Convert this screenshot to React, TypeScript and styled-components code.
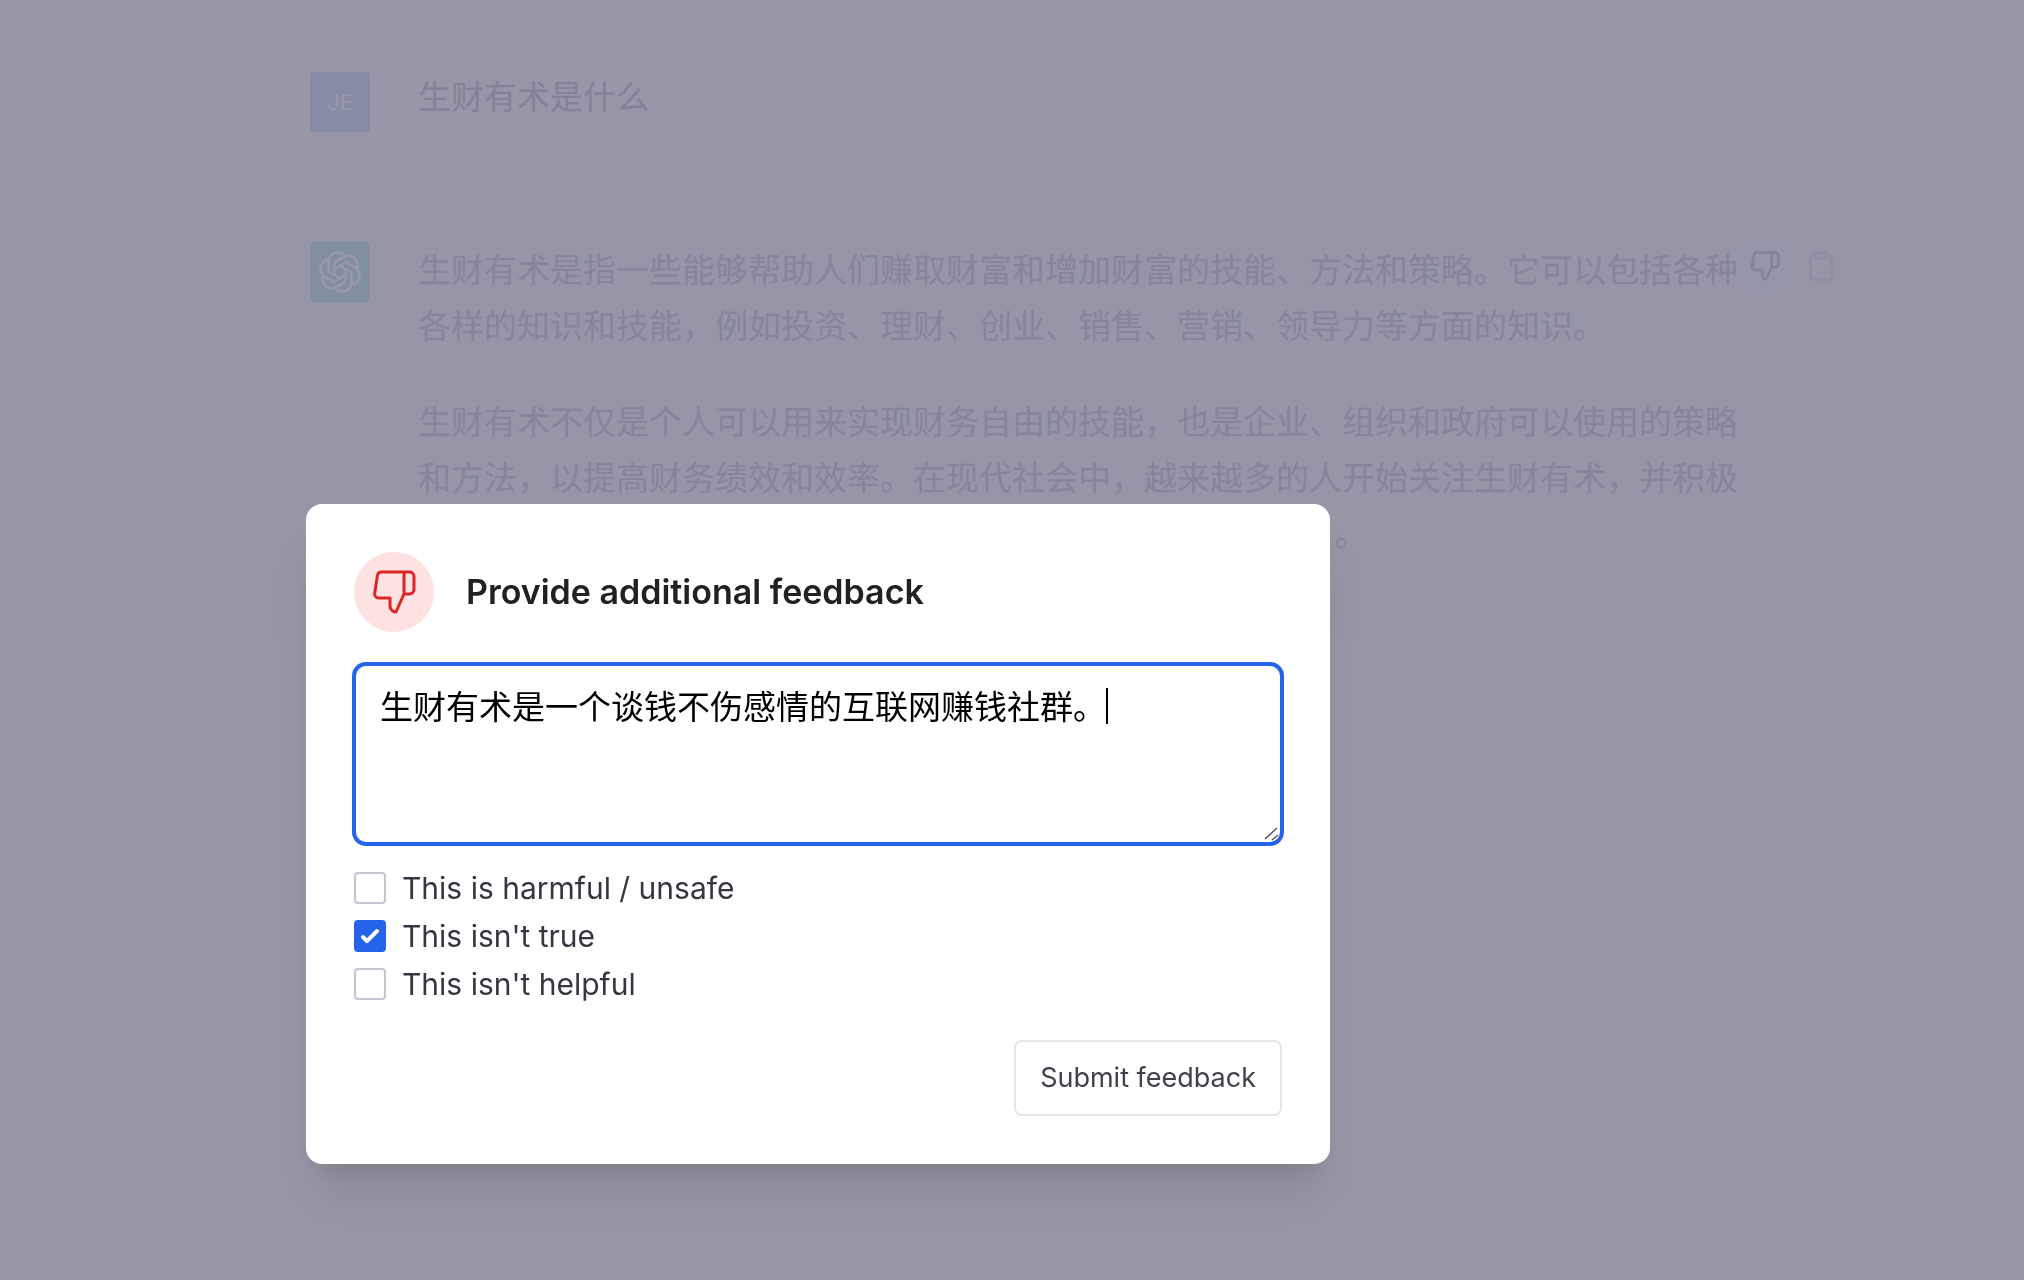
import React, { useState } from "react";
import styled, { createGlobalStyle } from "styled-components";
import { SiOpenai } from "react-icons/si";

const GlobalStyle = createGlobalStyle`
  *, *::before, *::after { box-sizing: border-box; }
  body {
    margin: 0;
    background: #9997a7;
    font-family: Inter, "Noto Sans CJK SC", sans-serif;
  }
  button, textarea, input { font: inherit; margin: 0; }
`;

const Page = styled.main`
  min-height: 100vh;
  background: #9997a7;
`;

const ThreadTop = styled.div`
  height: 24px;
  background: #9796a6;
  border-bottom: 1px solid #9594a4;
`;

const Message = styled.article<{ $answer?: boolean }>`
  display: grid;
  grid-template-columns: 60px minmax(0, 1fr) auto;
  column-gap: 48px;
  padding: 48px 179px ${(p) => (p.$answer ? 72 : 60)}px 310px;
  background: ${(p) => (p.$answer ? "#9796a6" : "#9997a7")};
  border-bottom: 2px solid #9695a5;
`;

const Avatar = styled.div<{ $tone: string }>`
  display: flex;
  align-items: center;
  justify-content: center;
  width: 60px;
  height: 60px;
  border-radius: 4px;
  background: ${(p) => p.$tone};
  color: #9998aa;
  font-size: 22px;
`;

const Body = styled.div<{ $answer?: boolean }>`
  display: flex;
  flex-direction: column;
  gap: 40px;
  grid-column: ${(p) => (p.$answer ? "2" : "2 / -1")};
  margin-right: ${(p) => (p.$answer ? "-48px" : "0")};
  font-size: 33px;
  line-height: ${(p) => (p.$answer ? 56 : 50)}px;
  color: ${(p) => (p.$answer ? "#86859b" : "#838296")};
`;

const Paragraph = styled.p`
  margin: 0;
  line-break: anywhere;
`;

const Actions = styled.div`
  display: flex;
  align-items: flex-start;
  gap: 8px;
`;

const IconButton = styled.button<{ $active?: boolean }>`
  display: flex;
  align-items: center;
  justify-content: center;
  width: 48px;
  height: 48px;
  padding: 0;
  border: 0;
  border-radius: 12px;
  background: ${(p) => (p.$active ? "#9596a9" : "transparent")};
  color: ${(p) => (p.$active ? "#838399" : "#908fa1")};
`;

const Overlay = styled.div`
  position: fixed;
  inset: 0;
  padding: 504px 0 0 306px;
`;

const Dialog = styled.form`
  width: 1024px;
  max-width: 100%;
  padding: 48px;
  border-radius: 16px;
  background: #fff;
  box-shadow: 0 40px 50px -10px rgba(0, 0, 0, 0.1), 0 16px 20px -12px rgba(0, 0, 0, 0.1);
`;

const Header = styled.header`
  display: flex;
  align-items: center;
  gap: 32px;
  margin-bottom: 32px;
`;

const Badge = styled.span`
  display: flex;
  align-items: center;
  justify-content: center;
  width: 80px;
  height: 80px;
  border-radius: 50%;
  background: #fee2e2;
  color: #dc2626;
`;

const Title = styled.h3`
  margin: 0;
  font-size: 34px;
  line-height: 48px;
  font-weight: 600;
  color: #202123;
`;

const Field = styled.div`
  position: relative;
  margin-bottom: 20px;
`;

const Feedback = styled.textarea`
  display: block;
  width: 100%;
  height: 180px;
  padding: 16px 24px;
  border: 2px solid #2563eb;
  border-radius: 12px;
  outline: none;
  box-shadow: 0 0 0 2px #2563eb;
  background: #fff;
  color: #000;
  font-size: 33px;
  line-height: 50px;
  caret-color: transparent;
  resize: none;
`;

const Caret = styled.span`
  position: absolute;
  left: 752px;
  top: 24px;
  width: 2px;
  height: 36px;
  background: #000;
`;

const Grip = styled.svg`
  position: absolute;
  right: 2px;
  bottom: 2px;
  pointer-events: none;
`;

const Option = styled.label`
  display: flex;
  align-items: center;
  gap: 16px;
  font-size: 30px;
  line-height: 48px;
  color: #353740;
`;

const Checkbox = styled.input`
  appearance: none;
  display: grid;
  place-content: center;
  width: 32px;
  height: 32px;
  border: 2px solid #c5c5d2;
  border-radius: 4px;
  background: #fff;

  &:checked {
    border-color: #2563eb;
    background: #2563eb
      url("data:image/svg+xml,%3Csvg viewBox='0 0 16 16' fill='white' xmlns='http://www.w3.org/2000/svg'%3E%3Cpath d='M12.207 4.793a1 1 0 010 1.414l-5 5a1 1 0 01-1.414 0l-2-2a1 1 0 011.414-1.414L6.5 9.086l4.293-4.293a1 1 0 011.414 0z'/%3E%3C/svg%3E")
      center / 32px 32px no-repeat;
  }
`;

const Footer = styled.footer`
  display: flex;
  justify-content: flex-end;
  margin-top: 32px;
`;

const Submit = styled.button`
  padding: 12px 24px;
  border: 2px solid #e5e5e5;
  border-radius: 8px;
  background: #fff;
  color: #40414f;
  font-size: 27px;
  line-height: 48px;
`;

const strokeProps = {
  viewBox: "0 0 24 24",
  fill: "none",
  stroke: "currentColor",
  strokeLinecap: "round" as const,
  strokeLinejoin: "round" as const,
};

function ThumbsDown({ size, weight }: { size: number; weight: number }) {
  return (
    <svg {...strokeProps} width={size} height={size} strokeWidth={weight} aria-hidden="true">
      <path d="M10 15v4a3 3 0 0 0 3 3l4-9V2H5.72a2 2 0 0 0-2 1.7l-1.38 9a2 2 0 0 0 2 2.3zm7-13h2.67A2.31 2.31 0 0 1 22 4v7a2.31 2.31 0 0 1-2.33 2H17" />
    </svg>
  );
}

function Clipboard() {
  return (
    <svg {...strokeProps} width={32} height={32} strokeWidth={2} aria-hidden="true">
      <path d="M16 4h2a2 2 0 0 1 2 2v14a2 2 0 0 1-2 2H6a2 2 0 0 1-2-2V6a2 2 0 0 1 2-2h2" />
      <rect x="8" y="2" width="8" height="4" rx="1" ry="1" />
    </svg>
  );
}

const reasons = ["This is harmful / unsafe", "This isn't true", "This isn't helpful"];

export default function App() {
  const [text, setText] = useState("生财有术是一个谈钱不伤感情的互联网赚钱社群。");
  const [checked, setChecked] = useState([false, true, false]);

  return (
    <>
      <GlobalStyle />
      <Page lang="zh-CN">
        <ThreadTop />
        <Message>
          <Avatar $tone="#868ba6">JE</Avatar>
          <Body>
            <Paragraph>生财有术是什么</Paragraph>
          </Body>
        </Message>
        <Message $answer>
          <Avatar $tone="#82909d">
            <SiOpenai size={42} />
          </Avatar>
          <Body $answer>
            <Paragraph>
              生财有术是指一些能够帮助人们赚取财富和增加财富的技能、方法和策略。它可以包括各种各样的知识和技能，例如投资、理财、创业、销售、营销、领导力等方面的知识。
            </Paragraph>
            <Paragraph>
              生财有术不仅是个人可以用来实现财务自由的技能，也是企业、组织和政府可以使用的策略和方法，以提高财务绩效和效率。在现代社会中，越来越多的人开始关注生财有术，并积极地学习和实践这些技能，以提高自己的生活质量和其财务状况&ensp; 。
            </Paragraph>
          </Body>
          <Actions>
            <IconButton type="button" $active aria-label="Thumbs down">
              <ThumbsDown size={32} weight={2} />
            </IconButton>
            <IconButton type="button" aria-label="Copy">
              <Clipboard />
            </IconButton>
          </Actions>
        </Message>
      </Page>
      <Overlay>
        <Dialog role="dialog" aria-labelledby="feedback-title" onSubmit={(e) => e.preventDefault()}>
          <Header>
            <Badge>
              <ThumbsDown size={48} weight={1.5} />
            </Badge>
            <Title id="feedback-title">Provide additional feedback</Title>
          </Header>
          <Field lang="zh-CN">
            <Feedback
              aria-labelledby="feedback-title"
              value={text}
              onChange={(e) => setText(e.target.value)}
            />
            <Caret />
            <Grip width="16" height="16" viewBox="0 0 16 16" stroke="#555" strokeWidth="1.5" aria-hidden="true">
              <path d="M1 13 13 2M8 14 14 9" />
            </Grip>
          </Field>
          {reasons.map((reason, i) => (
            <Option key={reason}>
              <Checkbox
                type="checkbox"
                checked={checked[i]}
                onChange={() => setChecked(checked.map((c, j) => (j === i ? !c : c)))}
              />
              {reason}
            </Option>
          ))}
          <Footer>
            <Submit type="submit">Submit feedback</Submit>
          </Footer>
        </Dialog>
      </Overlay>
    </>
  );
}
